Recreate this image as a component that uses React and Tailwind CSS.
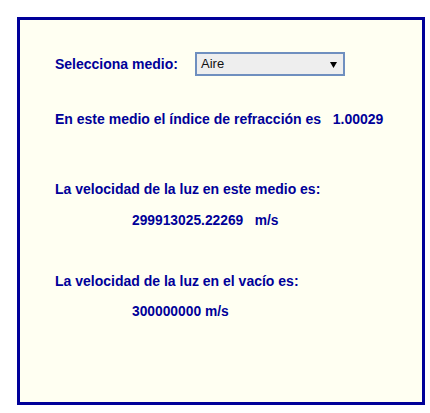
export default function App() {
  return (
    <div className="w-[430px] h-[413px] bg-white pt-[17px] pl-[17px]" style={{ fontFamily: '"Liberation Sans", Arial, sans-serif' }}>
      <div className="w-[408px] h-[388px] border-[3px] border-[#000099] bg-[#fffff2] text-[#000099] font-bold text-[14px] leading-[16px]">
        <div className="pt-[32px] pl-[35px] flex items-center h-[56px] box-border">
          <span className="w-[140px]">Selecciona medio:</span>
          <div className="w-[150px] h-[24px] border-2 border-[#6f8fbf] bg-[#eeeeee] flex items-center justify-between pl-[4px] pr-[6px] font-normal text-[13px] text-[#111]">
            <span>Aire</span>
            <svg width="7" height="6" viewBox="0 0 7 6" className="mt-[1px]">
              <polygon points="0,0 7,0 3.5,6" fill="#000" />
            </svg>
          </div>
        </div>
        <div className="mt-[35px] pl-[35px] whitespace-pre">En este medio el índice de refracción es   1.00029</div>
        <div className="mt-[54px] pl-[35px]">La velocidad de la luz en este medio es:</div>
        <div className="mt-[16px] pl-[112px] whitespace-pre text-[13.8px]">299913025.22269   m/s</div>
        <div className="mt-[44px] pl-[35px]">La velocidad de la luz en el vacío es:</div>
        <div className="mt-[15px] pl-[112px] text-[13.8px]">300000000 m/s</div>
      </div>
    </div>
  );
}
